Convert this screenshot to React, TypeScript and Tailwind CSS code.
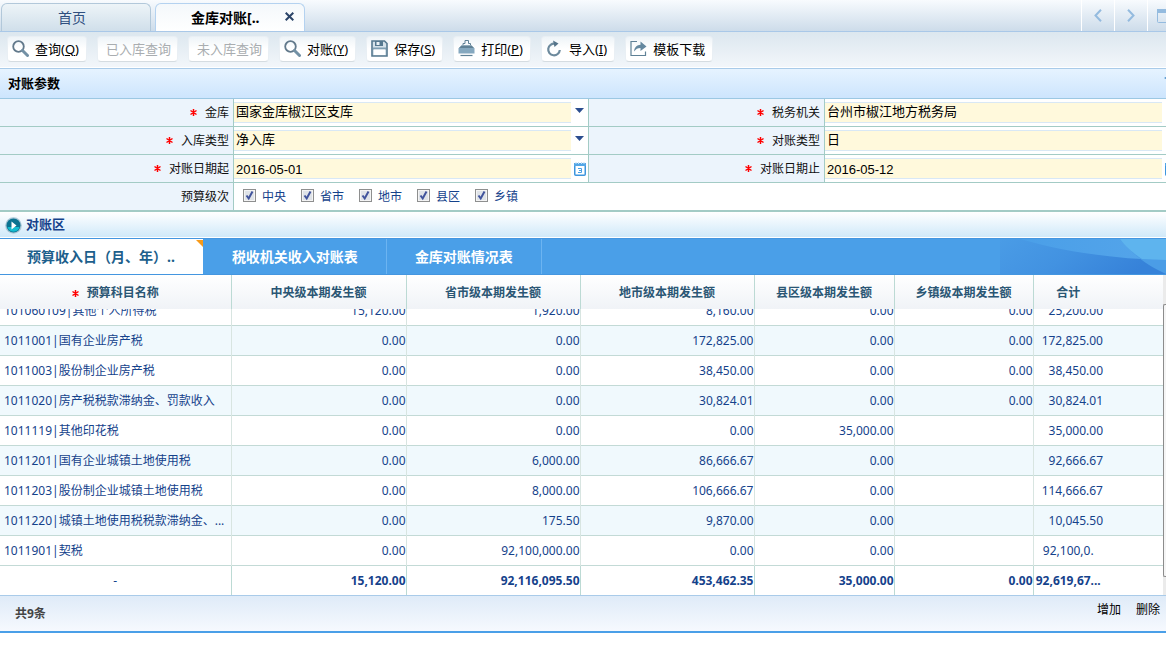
import { type ReactNode } from 'react';
import clsx from 'clsx';

interface ToolButton {
  label: string;
  hotkey?: string;
  icon?: ReactNode;
  disabled?: boolean;
}

const SearchIcon = () => (
  <svg viewBox="0 0 17 17" className="h-[17px] w-[17px]" fill="none">
    <circle cx="6.5" cy="6.5" r="5.3" stroke="#62798b" strokeWidth="1.8" />
    <path d="M10.5 10.5 15.5 15.5" stroke="#7391a5" strokeWidth="3" strokeLinecap="round" />
  </svg>
);

const SaveIcon = () => (
  <svg viewBox="0 0 17 17" className="h-[17px] w-[17px]">
    <path d="M1 1h12.5l2.5 2.5V16H1z" fill="#d5e2ea" stroke="#55788f" strokeWidth="1.6" />
    <path d="M4 1h8v5H4z" fill="#55788f" />
    <path d="M5.5 2h3v3h-3z" fill="#e9f0f4" />
    <path d="M2 7.5h13v2H2z" fill="#7f9fb3" />
    <path d="M3 9.5h11V15H3z" fill="#fff" />
  </svg>
);

const PrintIcon = () => (
  <svg viewBox="0 0 17 17" className="h-[17px] w-[17px]">
    <path d="M5 5V3.5h2v-3h3.5v3h2V5" fill="none" stroke="#5f8196" />
    <path d="M3.5 5.5h10l3 3v5H.5v-5z" fill="#85a8bf" />
    <path d="M3.5 5.5h10L16 8H1z" fill="#5f8196" />
    <path d="M2.5 15.5h12" stroke="#5f8196" strokeWidth="1.2" />
  </svg>
);

const ImportIcon = () => (
  <svg viewBox="0 0 17 17" className="h-[17px] w-[17px]" fill="none">
    <path d="M9 3.8A5.8 5.8 0 1 0 13.8 10" stroke="#6d8a9d" strokeWidth="2.2" />
    <path d="M7 .5 12.5 3.5 8.5 7z" fill="#55748a" />
  </svg>
);

const ShareIcon = () => (
  <svg viewBox="0 0 17 17" className="h-[17px] w-[17px]" fill="none">
    <path d="M7 1.5H1v14h14.5v-4" stroke="#5f8196" strokeWidth="1.2" />
    <path d="M4 11.5C4.5 7 7 5 10.5 4.8V1.5l6 5-6 4.5V8C7.5 8 6 9 4 11.5z" fill="#64889f" />
  </svg>
);

const toolButtons: ToolButton[] = [
  { label: '查询', hotkey: 'Q', icon: <SearchIcon /> },
  { label: '已入库查询', disabled: true },
  { label: '未入库查询', disabled: true },
  { label: '对账', hotkey: 'Y', icon: <SearchIcon /> },
  { label: '保存', hotkey: 'S', icon: <SaveIcon /> },
  { label: '打印', hotkey: 'P', icon: <PrintIcon /> },
  { label: '导入', hotkey: 'I', icon: <ImportIcon /> },
  { label: '模板下载', icon: <ShareIcon /> },
];

const levels = ['中央', '省市', '地市', '县区', '乡镇'];

const columns = ['中央级本期发生额', '省市级本期发生额', '地市级本期发生额', '县区级本期发生额', '乡镇级本期发生额'];

const rows = [
  ['101060109|其他个人所得税', '15,120.00', '1,920.00', '8,160.00', '0.00', '0.00', '25,200.00'],
  ['1011001|国有企业房产税', '0.00', '0.00', '172,825.00', '0.00', '0.00', '172,825.00'],
  ['1011003|股份制企业房产税', '0.00', '0.00', '38,450.00', '0.00', '0.00', '38,450.00'],
  ['1011020|房产税税款滞纳金、罚款收入', '0.00', '0.00', '30,824.01', '0.00', '0.00', '30,824.01'],
  ['1011119|其他印花税', '0.00', '0.00', '0.00', '35,000.00', '', '35,000.00'],
  ['1011201|国有企业城镇土地使用税', '0.00', '6,000.00', '86,666.67', '0.00', '', '92,666.67'],
  ['1011203|股份制企业城镇土地使用税', '0.00', '8,000.00', '106,666.67', '0.00', '', '114,666.67'],
  ['1011220|城镇土地使用税税款滞纳金、...', '0.00', '175.50', '9,870.00', '0.00', '', '10,045.50'],
  ['1011901|契税', '0.00', '92,100,000.00', '0.00', '0.00', '', '92,100,0.'],
];

const totals = ['15,120.00', '92,116,095.50', '453,462.35', '35,000.00', '0.00'];

function Required() {
  return (
    <svg viewBox="0 0 7 7" className="h-[7px] w-[7px]" stroke="#f00" strokeWidth="1.5">
      <path d="M3.5 0v7M.5 1.5l6 4M6.5 1.5l-6 4" />
    </svg>
  );
}

function FieldLabel({ id, text, required }: { id?: string; text: string; required?: boolean }) {
  return (
    <div className="flex items-center justify-end gap-2 border-r border-b border-[#a3cbc5] bg-[#ecf4fc] pr-1 text-xs text-[#111]">
      {required && <Required />}
      {id ? <label htmlFor={id}>{text}</label> : <span>{text}</span>}
    </div>
  );
}

function Field({ id, value, kind }: { id: string; value: string; kind: 'select' | 'date' }) {
  const box =
    'h-[21px] min-w-0 flex-1 appearance-none border-y border-[#d9e8f5] bg-[#fff9dc] pl-0.5 text-[13px] text-black outline-none';
  return (
    <div className="flex items-start overflow-hidden border-b border-[#a3cbc5] pt-[3px]">
      {kind === 'select' ? (
        <select id={id} className={clsx(box, 'pb-0.5 leading-[17px]')} defaultValue={value}>
          <option>{value}</option>
        </select>
      ) : (
        <input
          id={id}
          type="text"
          className={clsx(box, "pt-px font-['Liberation_Sans'] leading-[18px]")}
          defaultValue={value}
        />
      )}
      <div className="flex h-[21px] w-[17px] shrink-0 items-center justify-center">
        {kind === 'select' ? (
          <svg viewBox="0 0 9 5" className="mb-1 h-[5px] w-[9px]">
            <path d="M0 0h9L4.5 5z" fill="#2b4d8f" />
          </svg>
        ) : (
          <svg viewBox="0 0 12 14" className="h-[14px] w-[12px] shrink-0">
            <rect x=".75" y="1.75" width="10.5" height="11.5" rx="1" fill="#fff" stroke="#3d96dd" strokeWidth="1.5" />
            <path d="M0 1h12v3H0z" fill="#54a7e6" />
            <path d="M2 0v2M4.5 0v2M7.5 0v2M10 0v2" stroke="#c5e1f6" />
            <path d="M4 6.5h3.5v4H4M5 8.5h2.5" fill="none" stroke="#4aa0e4" />
          </svg>
        )}
      </div>
    </div>
  );
}

function WindowTabs() {
  return (
    <div className="flex h-8 items-end overflow-hidden border-b border-[#a9c8e8] bg-linear-to-b from-[#f8fbfe] to-[#cddcea] pl-px">
      <button
        type="button"
        className="h-7 w-[150px] rounded-t-md border border-b-0 border-[#b2c8da] bg-linear-to-b from-[#edf4f8] to-[#d0dfea] pr-2 text-sm text-[#2f4f7f]"
      >
        首页
      </button>
      <div className="-mb-px ml-1 flex h-[29px] w-[150px] items-center rounded-t-md border border-b-0 border-[#b4d2f0] bg-linear-to-b from-[#f4f8fb] to-white pl-[35px]">
        <button type="button" className="text-sm font-bold text-black">
          金库对账[..
        </button>
        <button type="button" aria-label="关闭" className="mr-2.5 mb-1 ml-auto">
          <svg viewBox="0 0 9 9" className="h-[9px] w-[9px]" stroke="#2b4468" strokeWidth="2">
            <path d="m.7.7 7.6 7.6m0-7.6L.7 8.3" />
          </svg>
        </button>
      </div>
      <div className="ml-auto flex h-full w-[85px] overflow-hidden text-[#94bbdf]">
        <button type="button" aria-label="上一个" className="flex w-[33px] shrink-0 items-center justify-center border-l border-white">
          <svg viewBox="0 0 8 13" className="h-[13px] w-2" fill="none" stroke="currentColor" strokeWidth="2">
            <path d="M7 .7 1.5 6.5 7 12.3" />
          </svg>
        </button>
        <button type="button" aria-label="下一个" className="flex w-[33px] shrink-0 items-center justify-center border-l border-white">
          <svg viewBox="0 0 8 13" className="h-[13px] w-2" fill="none" stroke="currentColor" strokeWidth="2">
            <path d="m1 .7 5.5 5.8L1 12.3" />
          </svg>
        </button>
        <button type="button" aria-label="窗口" className="flex w-[33px] shrink-0 items-center justify-center border-l border-white">
          <svg viewBox="0 0 15 14" className="h-[14px] w-[15px] shrink-0">
            <rect x=".5" y=".5" width="14" height="13" rx="1" fill="none" stroke="currentColor" />
            <path d="M0 0h15v4H0z" fill="currentColor" />
          </svg>
        </button>
      </div>
    </div>
  );
}

function Toolbar() {
  return (
    <div className="border-b border-[#a9cbe9]">
      <div className="flex h-9 items-center gap-2.5 border-b border-white bg-linear-to-b from-[#dce7ef] to-[#f2f6fa] pb-0.5 pl-[7px]">
        {toolButtons.map((b) => (
          <button
            key={b.label}
            type="button"
            disabled={b.disabled}
            className={clsx(
              'flex h-[26px] items-center gap-1.5 rounded-sm border border-[#e9eff4] border-b-[#d5dce1] bg-linear-to-b from-[#eef4f8] to-white to-50% text-[13px] leading-5 whitespace-nowrap',
              b.disabled ? 'pr-1.5 pl-2 text-[#a9adb0]' : 'pr-[7px] pl-1 text-black',
            )}
          >
            {b.icon}
            <span>
              {b.label}
              {b.hotkey && (
                <>
                  (<u>{b.hotkey}</u>)
                </>
              )}
            </span>
          </button>
        ))}
      </div>
    </div>
  );
}

function Params() {
  return (
    <section>
      <div className="flex h-[30px] items-center justify-between border-b border-[#9cc8e3] bg-linear-to-b from-[#e6f3ff] to-[#cde5fd] pl-2">
        <h2 className="text-[13px] font-bold text-black">对账参数</h2>
        <div className="mb-3 w-0.5 overflow-hidden">
          <svg viewBox="0 0 8 4" className="h-1 w-2" fill="#3f87c4">
            <path d="M0 2 4 0l4 2-4 2z" />
          </svg>
        </div>
      </div>
      <form className="grid auto-rows-[28px] grid-cols-[234fr_355fr_236fr_341fr]">
        <FieldLabel id="treasury" text="金库" required />
        <div className="grid border-r border-[#a3cbc5]">
          <Field id="treasury" value="国家金库椒江区支库" kind="select" />
        </div>
        <FieldLabel id="office" text="税务机关" required />
        <div className="-mr-[13px] grid">
          <Field id="office" value="台州市椒江地方税务局" kind="select" />
        </div>

        <FieldLabel id="entry-type" text="入库类型" required />
        <div className="grid border-r border-[#a3cbc5]">
          <Field id="entry-type" value="净入库" kind="select" />
        </div>
        <FieldLabel id="check-type" text="对账类型" required />
        <div className="-mr-[13px] grid">
          <Field id="check-type" value="日" kind="select" />
        </div>

        <FieldLabel id="date-from" text="对账日期起" required />
        <div className="grid border-r border-[#a3cbc5]">
          <Field id="date-from" value="2016-05-01" kind="date" />
        </div>
        <FieldLabel id="date-to" text="对账日期止" required />
        <div className="-mr-[13px] grid">
          <Field id="date-to" value="2016-05-12" kind="date" />
        </div>

        <FieldLabel text="预算级次" />
        <div className="col-span-3 flex items-center gap-[15px] border-b border-[#a3cbc5] pl-[9px]">
          {levels.map((level) => (
            <label key={level} className="flex items-center gap-1.5 text-xs text-[#15428b]">
              <span className="relative mb-0.5 h-[13px] w-[13px]">
                <input
                  type="checkbox"
                  defaultChecked
                  className="peer block h-[13px] w-[13px] appearance-none border border-[#8e8f8f] bg-[#dfe3e8] shadow-[inset_0_0_0_1px_#f4f4f4]"
                />
                <svg
                  viewBox="0 0 13 13"
                  className="pointer-events-none absolute inset-0 hidden peer-checked:block"
                  fill="none"
                  stroke="#40539c"
                  strokeWidth="2"
                >
                  <path d="m3.5 6.5 2.2 3 3.8-7" />
                </svg>
              </span>
              {level}
            </label>
          ))}
        </div>
      </form>
    </section>
  );
}

function ReportTabs() {
  return (
    <nav className="flex h-[37px] border-y border-[#4496e0] bg-[#4a9fe8] text-sm font-bold whitespace-nowrap text-white">
      <button type="button" className="relative bg-white px-7 pl-[27px] text-[#1d5f8c]">
        预算收入日（月、年）..
        <svg viewBox="0 0 7 7" className="absolute top-px right-0 h-[7px] w-[7px]" fill="#f79a1a">
          <path d="M0 0h7v7z" />
        </svg>
      </button>
      <button type="button" className="border-x border-l-[#4a9fe8] border-r-[#6cb4f1] px-7">
        税收机关收入对账表
      </button>
      <button type="button" className="border-r border-[#6cb4f1] px-7">
        金库对账情况表
      </button>
      <svg viewBox="0 0 166 35" preserveAspectRatio="none" className="ml-auto h-full w-[166px]">
        <defs>
          <linearGradient id="wave" x1="0" y1="0" x2="1" y2="0.3">
            <stop offset="0" stopColor="#4a9ce6" />
            <stop offset="0.5" stopColor="#4292e1" />
            <stop offset="1" stopColor="#3682d9" />
          </linearGradient>
          <linearGradient id="glow" x1="0" y1="0" x2="1" y2="0">
            <stop offset="0" stopColor="#4a9fe8" />
            <stop offset="1" stopColor="#55a5ea" />
          </linearGradient>
        </defs>
        <path d="M0 0h166v35H0z" fill="url(#wave)" />
        <path d="M20 0C65 13 115 20 166 21V0z" fill="url(#glow)" />
        <path d="M120 0c12 15 26 26 46 35V0z" fill="#4b9de6" />
        <path d="M120 0c7 9 13 14 22 20l24 1V0z" fill="#5eb4ee" />
      </svg>
    </nav>
  );
}

function Cols() {
  return (
    <colgroup>
      <col className="w-[231px]" />
      <col className="w-[175px]" />
      <col className="w-[174px]" />
      <col className="w-[174px]" />
      <col className="w-[140px]" />
      <col className="w-[139px]" />
      <col className="w-[70px]" />
      <col />
    </colgroup>
  );
}

function ReportGrid() {
  return (
    <div className="flex text-xs whitespace-nowrap text-[#15428b]">
      <div className="min-w-0 flex-1">
        <table className="w-full table-fixed">
          <Cols />
          <thead>
            <tr className="h-[34px] bg-linear-to-b from-white to-[#f0f3f7] text-[#2a5674]">
              <th className="border-r border-[#bcdad4] pt-0.5">
                <span className="inline-flex items-center gap-2">
                  <Required />
                  预算科目名称
                </span>
              </th>
              {columns.map((c) => (
                <th key={c} className="border-r border-[#bcdad4] pt-0.5">
                  {c}
                </th>
              ))}
              <th className="pt-0.5">合计</th>
              <th />
            </tr>
          </thead>
        </table>
        {/* scrolled to the last row */}
        <div className="flex h-[286px] flex-col justify-end overflow-hidden">
          <table className="w-full shrink-0 table-fixed">
            <Cols />
            <tbody>
              {rows.map(([name, ...cells], i) => (
                <tr key={name} className={clsx('h-[30px] border-b border-[#c3dad6]', i % 2 === 1 && 'bg-[#f0f9fd]')}>
                  <td className="border-r border-[#d8e5e1] pt-0.5 pl-1">{name}</td>
                  {cells.slice(0, 5).map((cell, j) => (
                    <td key={j} className="border-r border-[#d8e5e1] pt-0.5 text-right">
                      {cell}
                    </td>
                  ))}
                  <td className={clsx('pt-0.5', cells[5].endsWith('.') ? 'text-center' : 'text-right')}>{cells[5]}</td>
                  <td />
                </tr>
              ))}
            </tbody>
            <tfoot>
              <tr className="h-[30px] font-bold">
                <td className="border-r border-[#bcdad4] pt-0.5 text-center font-normal">-</td>
                {totals.map((t, i) => (
                  <td key={i} className="border-r border-[#bcdad4] pt-0.5 text-right">
                    {t}
                  </td>
                ))}
                <td className="pt-0.5 text-center">92,619,67...</td>
                <td />
              </tr>
            </tfoot>
          </table>
        </div>
      </div>
      <div className="flex w-[3px] flex-col bg-[#ebebeb] pt-[29px] pb-[18px]">
        <div className="flex-1 rounded-l-xs border border-r-0 border-[#8c8c8c] bg-[#f5f5f5]" />
      </div>
    </div>
  );
}

export default function App() {
  return (
    <div className="min-h-screen overflow-hidden bg-white font-['Noto_Sans','Noto_Sans_CJK_SC',sans-serif]">
      <WindowTabs />
      <Toolbar />
      <Params />
      <section>
        <div className="flex h-[27px] items-center gap-1 border-t border-b border-t-[#a3cbc5] border-b-white bg-linear-to-b from-white to-[#d0e9f9] pt-px pl-[5px]">
          <svg viewBox="0 0 17 17" className="h-[17px] w-[17px]">
            <circle cx="8.5" cy="8.5" r="8.3" fill="#a9c6d6" />
            <circle cx="8.5" cy="8.5" r="7" fill="#0b7391" />
            <path d="M2.5 10a6.2 6.2 0 0 0 12 0z" fill="#14bcd0" />
            <path d="M6.5 4.5v8l5-4z" fill="#fff" />
          </svg>
          <h2 className="text-[13px] font-bold text-[#15428b]">对账区</h2>
        </div>
        <ReportTabs />
        <ReportGrid />
        <div className="flex h-[38px] justify-between border-t border-b-2 border-t-[#a9cbe9] border-b-[#4a9fe8] bg-linear-to-b from-[#dfebf8] to-[#f6f9fe] pr-1.5 pl-[15px] text-xs">
          <span className="self-center font-bold text-[#444]">共9条</span>
          <div className="flex h-7 gap-[15px] text-black">
            <button type="button">增加</button>
            <button type="button">删除</button>
          </div>
        </div>
      </section>
    </div>
  );
}
